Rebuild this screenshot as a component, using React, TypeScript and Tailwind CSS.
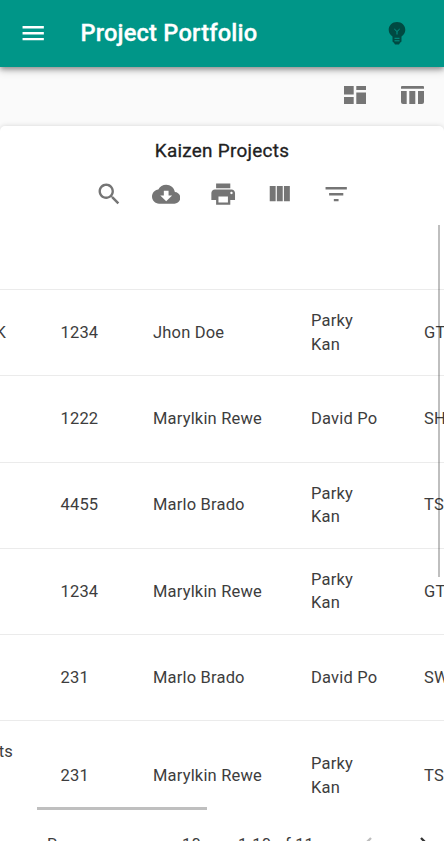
import type { ReactNode } from "react";

type Row = { tail: string; id: string; owner: string; sponsor: string; site: string };

const rows: Row[] = [
  { tail: "K", id: "1234", owner: "Jhon Doe", sponsor: "Parky Kan", site: "GTK" },
  { tail: "", id: "1222", owner: "Marylkin Rewe", sponsor: "David Po", site: "SHK" },
  { tail: "", id: "4455", owner: "Marlo Brado", sponsor: "Parky Kan", site: "TSK" },
  { tail: "", id: "1234", owner: "Marylkin Rewe", sponsor: "Parky Kan", site: "GTK" },
  { tail: "", id: "231", owner: "Marlo Brado", sponsor: "David Po", site: "SWK" },
  { tail: "ts", id: "231", owner: "Marylkin Rewe", sponsor: "Parky Kan", site: "TSK" },
];

function Icon({ children }: { children: ReactNode }) {
  return (
    <svg viewBox="0 0 24 24" className="size-[28.4px] shrink-0 fill-current">
      {children}
    </svg>
  );
}

function Header() {
  return (
    <header className="relative z-10 flex h-[66.5px] items-center bg-[#009688] pl-[19px] pr-[33px] text-white shadow-[0_2px_5px_rgba(0,0,0,0.35),0_4px_8px_rgba(0,0,0,0.16)]">
      <Icon>
        <path d="M3 18h18v-2H3v2zm0-5h18v-2H3v2zm0-7v2h18V6H3z" />
      </Icon>
      <h1 className="ml-[33px] mt-[2px] grow text-[23.7px] font-medium leading-none tracking-[0.18px] [-webkit-text-stroke:0.3px_white]">
        Project Portfolio
      </h1>
      <svg viewBox="0 0 28 28" className="size-7 fill-[#004a42]">
        <path d="M14 3C9.2 3 5.7 6.5 5.7 11c0 3.100 1.700 5 3.800 6.500V22c0 .8.500 1.300 1.300 1.500L12 25.500h4l1.200-2c.8-.2 1.300-.7 1.300-1.500v-4.500c2.100-1.500 3.800-3.400 3.800-6.500 0-4.500-3.500-8-8.300-8z" />
        <g className="fill-none stroke-[#009688]" strokeWidth="1">
          <path d="M11.300 10l2.700 2.500 2.700-2.500M14 12.500v3" />
          <path d="M11.500 19.300h5M11.500 21.800h5" />
        </g>
      </svg>
    </header>
  );
}

function ViewSwitch() {
  return (
    <div className="flex h-[59.5px] items-start justify-end gap-[35px] pr-[20.500px] pt-[19.500px] text-[#757575]">
      <svg viewBox="0 0 22 18" className="h-[18px] w-[22px] fill-current">
        <path d="M0 0h9.700v8.500H0zM0 11h9.700v7H0zM12.300 0H22v4H12.300zM12.300 6.500H22V18h-9.700z" />
      </svg>
      <svg viewBox="0 0 23 18" className="h-[18px] w-[23px] fill-current">
        <path d="M1 0h21q1 0 1 1v1.700H0V1q0-1 1-1zM0 5h5.700v13H2q-2 0-2-2zM8.300 5h6v13h-6zM17 5h6v11q0 2-2 2h-4z" />
      </svg>
    </div>
  );
}

function Toolbar() {
  return (
    <div className="mt-[16.500px] flex items-center justify-center gap-[28.500px] pl-[1.500px] text-[#757575]">
      <Icon>
        <path d="M15.500 14h-.79l-.28-.27C15.410 12.590 16 11.110 16 9.500 16 5.910 13.090 3 9.500 3S3 5.910 3 9.500 5.910 16 9.500 16c1.610 0 3.090-.59 4.230-1.570l.27.28v.79l5 4.990L20.490 19l-4.990-5zm-6 0C7.010 14 5 11.990 5 9.500S7.010 5 9.500 5 14 7.010 14 9.500 11.990 14 9.500 14z" />
      </Icon>
      <Icon>
        <path d="M19.350 10.040C18.670 6.590 15.640 4 12 4 9.110 4 6.600 5.640 5.350 8.040 2.340 8.360 0 10.910 0 14c0 3.310 2.690 6 6 6h13c2.760 0 5-2.240 5-5 0-2.640-2.050-4.780-4.650-4.960zM17 13l-5 5-5-5h3V9h4v4h3z" />
      </Icon>
      <Icon>
        <path d="M19 8H5c-1.660 0-3 1.340-3 3v6h4v4h12v-4h4v-6c0-1.660-1.340-3-3-3zm-3 11H8v-5h8v5zm3-7c-.55 0-1-.45-1-1s.45-1 1-1 1 .45 1 1-.45 1-1 1zm-1-9H6v4h12V3z" />
      </Icon>
      <Icon>
        <path d="M10 18h5V5h-5v13zm-6 0h5V5H4v13zM16 5v13h5V5h-5z" />
      </Icon>
      <Icon>
        <path d="M10 18h4v-2h-4v2zM3 6v2h18V6H3zm3 7h12v-2H6v2z" />
      </Icon>
    </div>
  );
}

function Table() {
  return (
    <div className="relative mt-[17.300px] h-[587px] overflow-hidden">
      <div className="h-[65px] border-b border-[#ebebeb]" />
      {rows.map((row, i) => (
        <div
          key={i}
          className="grid h-[86.200px] grid-cols-[60.500px_92.500px_158px_113px_60px] items-center border-b border-[#ebebeb] last-of-type:h-[110px]"
        >
          <span className={row.tail === "ts" ? "-ml-5 w-[33px] pb-[48px] text-right" : "-ml-5 w-[26px] text-right"}>
            {row.tail}
          </span>
          <span>{row.id}</span>
          <span>{row.owner}</span>
          <span className={row.sponsor === "Parky Kan" ? "w-[60px]" : ""}>{row.sponsor}</span>
          <span>{row.site}</span>
        </div>
      ))}
      <i className="absolute left-[437.500px] top-0 h-[352px] w-[2.500px] bg-black/25" />
      <i className="absolute bottom-[1.800px] left-[37px] h-[3px] w-[170px] bg-black/25" />
    </div>
  );
}

function Pagination() {
  return (
    <div className="flex h-[29px] items-start overflow-hidden pl-[47px] pt-[21px]">
      <span className="w-[135px]">Rows</span>
      <span className="w-[19px]">10</span>
      <svg viewBox="0 0 14 7" className="ml-[7px] mt-[7.500px] h-[7px] w-[14px] fill-[#757575]">
        <path d="M0 0h14L7 7z" />
      </svg>
      <span className="ml-[16px] w-[120px]">1-10 of 11</span>
      <svg viewBox="0 0 9 14" className="ml-[5px] mt-[4px] h-[14px] w-[9px] fill-none stroke-[#bdbdbd]" strokeWidth="2.300">
        <path d="M8 1L2 7l6 6" />
      </svg>
      <svg viewBox="0 0 9 14" className="ml-[48px] mt-[4px] h-[14px] w-[9px] fill-none stroke-[#333]" strokeWidth="2.300">
        <path d="M1 1l6 6-6 6" />
      </svg>
    </div>
  );
}

export default function App() {
  return (
    <div className="h-[841px] w-[444px] overflow-hidden bg-[#fafafa] font-['Roboto',sans-serif] text-[16.500px] leading-[23.600px] tracking-[0.180px] text-[#3d3d3d]">
      <Header />
      <ViewSwitch />
      <main className="h-[730px] rounded-t-[5px] bg-white pt-[13px] shadow-[0_0_5px_rgba(0,0,0,0.15)]">
        <h2 className="text-center text-[18.900px] font-normal leading-6 tracking-[0.270px] text-[#212121] [-webkit-text-stroke:0.3px_#212121]">
          Kaizen Projects
        </h2>
        <Toolbar />
        <Table />
        <Pagination />
      </main>
    </div>
  );
}
